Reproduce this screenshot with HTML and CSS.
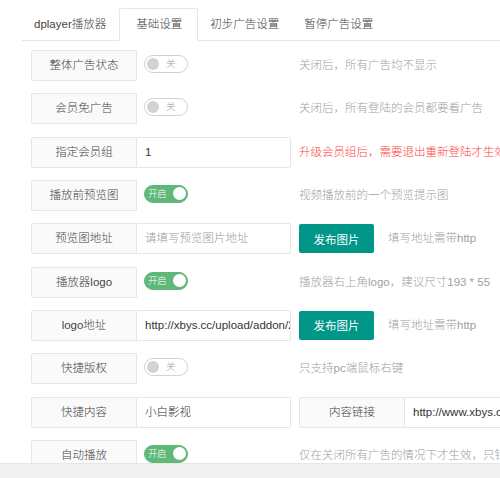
FILE: index.html
```html
<!DOCTYPE html>
<html lang="zh-CN">
<head>
<meta charset="utf-8">
<title>设置</title>
<link rel="stylesheet" href="styles.css">
</head>
<body>
<div class="page">
  <div class="main">
    <ul class="tabs">
      <li class="tab">dplayer播放器</li>
      <li class="tab tab-active">基础设置</li>
      <li class="tab">初步广告设置</li>
      <li class="tab">暂停广告设置</li>
    </ul>
    <div class="form">
      <div class="row">
        <div class="label">整体广告状态</div>
        <div class="cell"><span class="switch off"><i class="knob"></i><em>关</em></span></div>
        <div class="aux">关闭后，所有广告均不显示</div>
      </div>
      <div class="row">
        <div class="label">会员免广告</div>
        <div class="cell"><span class="switch off"><i class="knob"></i><em>关</em></span></div>
        <div class="aux">关闭后，所有登陆的会员都要看广告</div>
      </div>
      <div class="row">
        <div class="label">指定会员组</div>
        <div class="input"><span class="val">1</span></div>
        <div class="aux red">升级会员组后，需要退出重新登陆才生效</div>
      </div>
      <div class="row">
        <div class="label">播放前预览图</div>
        <div class="cell"><span class="switch on"><em>开启</em><i class="knob"></i></span></div>
        <div class="aux">视频播放前的一个预览提示图</div>
      </div>
      <div class="row">
        <div class="label">预览图地址</div>
        <div class="input placeholder"><span class="val">请填写预览图片地址</span></div>
        <button class="btn" type="button">发布图片</button>
        <div class="aux aux-after">填写地址需带http</div>
      </div>
      <div class="row">
        <div class="label">播放器logo</div>
        <div class="cell"><span class="switch on"><em>开启</em><i class="knob"></i></span></div>
        <div class="aux">播放器右上角logo，建议尺寸193 * 55</div>
      </div>
      <div class="row">
        <div class="label">logo地址</div>
        <div class="input"><span class="val">http://xbys.cc/upload/addon/2020/logo.png</span></div>
        <button class="btn" type="button">发布图片</button>
        <div class="aux aux-after">填写地址需带http</div>
      </div>
      <div class="row">
        <div class="label">快捷版权</div>
        <div class="cell"><span class="switch off"><i class="knob"></i><em>关</em></span></div>
        <div class="aux">只支持pc端鼠标右键</div>
      </div>
      <div class="row">
        <div class="label">快捷内容</div>
        <div class="input"><span class="val">小白影视</span></div>
        <div class="label label-second">内容链接</div>
        <div class="input"><span class="val">http://www.xbys.cc</span></div>
      </div>
      <div class="row">
        <div class="label">自动播放</div>
        <div class="cell"><span class="switch on"><em>开启</em><i class="knob"></i></span></div>
        <div class="aux">仅在关闭所有广告的情况下才生效，只针对电脑端有效</div>
      </div>
    </div>
  </div>
  <div class="footer"></div>
</div>
</body>
</html>
```
FILE: styles.css
```css
* { box-sizing: border-box; }
html, body { margin: 0; padding: 0; background: #fff; }
body {
  font-family: "Liberation Sans", "Noto Sans CJK SC", sans-serif;
  font-size: 11.5px;
  font-weight: 300;
  color: #444;
}
.page {
  width: 500px;
  height: 478px;
  display: flex;
  flex-direction: column;
  overflow: hidden;
}
.main {
  flex: 1;
  min-height: 0;
  overflow: hidden;
  padding: 8px 0 0 22px;
}
.tabs {
  list-style: none;
  margin: 0;
  padding: 0;
  display: flex;
  height: 33px;
  border-bottom: 1px solid #e6e6e6;
  white-space: nowrap;
}
.tab {
  padding: 0 13px 0 12px;
  line-height: 32px;
  height: 32px;
  color: #444;
}
.tab-active {
  height: 33px;
  padding: 0 15px 0 16px;
  background: #fff;
  border: 1px solid #e6e6e6;
  border-bottom-color: #fff;
  border-radius: 2px 2px 0 0;
  line-height: 31px;
}
.form {
  padding: 9px 0 0 9px;
}
.row {
  display: flex;
  flex-wrap: nowrap;
  align-items: flex-start;
  height: 31px;
  margin-bottom: 12.33px;
  white-space: nowrap;
}
.label {
  flex: none;
  width: 106px;
  height: 31px;
  line-height: 29px;
  text-align: center;
  border: 1px solid #e6e6e6;
  background: #fafafa;
  border-radius: 2px 0 0 2px;
  color: #444;
}
.label-second {
  margin-left: 8px;
}
.input {
  flex: none;
  width: 154px;
  height: 31px;
  line-height: 29px;
  padding: 0 0 0 8px;
  border: 1px solid #e6e6e6;
  border-left: none;
  border-radius: 0 2px 2px 0;
  overflow: hidden;
  color: #333;
  background: #fff;
}
.input .val {
  display: block;
  overflow: hidden;
  width: 145px;
}
.placeholder { color: #999; }
.cell {
  flex: none;
  width: 154px;
  height: 31px;
  padding: 5px 0 0 7px;
}
.switch {
  position: relative;
  display: flex;
  align-items: center;
  width: 44px;
  height: 18px;
  border-radius: 9px;
  border: 1px solid #d2d2d2;
  background: #fff;
}
.switch em {
  font-style: normal;
  font-size: 9.5px;
  line-height: 16px;
}
.switch .knob {
  display: block;
  border-radius: 50%;
}
.switch.off .knob {
  width: 12px;
  height: 12px;
  background: #d2d2d2;
  margin-left: 2px;
}
.switch.off em {
  color: #999;
  margin-left: 7px;
}
.switch.on {
  background: #5fb878;
  border-color: #5fb878;
  justify-content: space-between;
}
.switch.on em {
  color: #fff;
  margin-left: 3px;
  letter-spacing: -0.5px;
}
.switch.on .knob {
  width: 13px;
  height: 13px;
  background: #fff;
  margin-right: 1px;
}
.aux {
  flex: none;
  margin-left: 8px;
  line-height: 31px;
  color: #a0a0a0;
}
.aux.red { color: #ff3d3d; }
.aux-after { margin-left: 14px; }
.btn {
  flex: none;
  margin: 1px 0 0 8px;
  width: 75px;
  height: 29px;
  border: none;
  border-radius: 2px;
  background: #009688;
  color: #fff;
  font-family: inherit;
  font-size: 11.5px;
  font-weight: 400;
  padding: 0;
}
.footer {
  flex: none;
  height: 15px;
  background: #f0f0f0;
  border-top: 1px solid #e6e6e6;
}
```
